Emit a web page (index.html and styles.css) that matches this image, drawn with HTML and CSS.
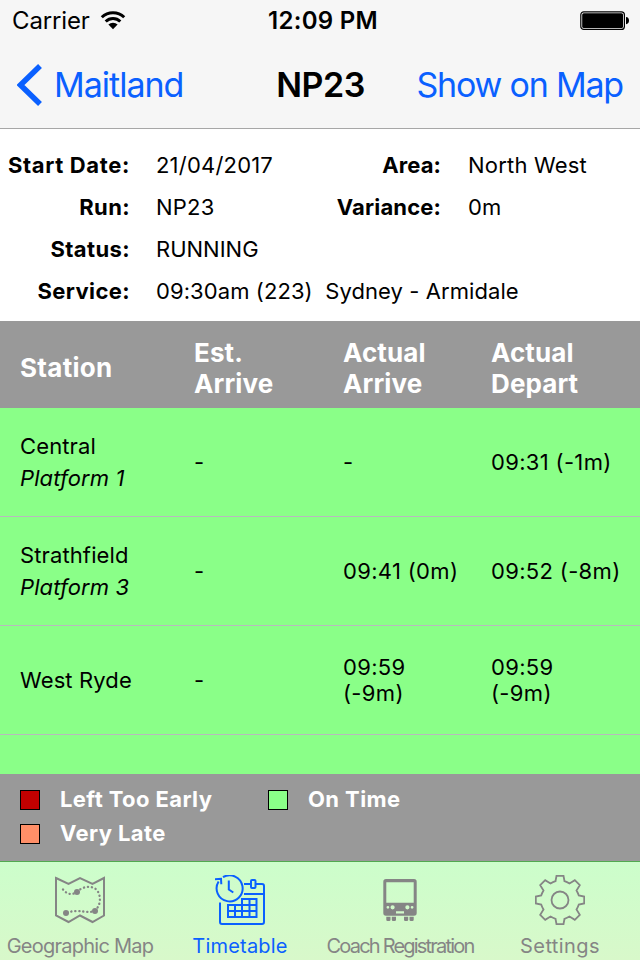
FILE: index.html
```
<!DOCTYPE html>
<html lang="en">
<head>
    <meta charset="UTF-8">
    <meta name="viewport" content="width=device-width, initial-scale=1.0">
    <title>NP23 timetable</title>
    <link rel="stylesheet" href="styles.css">
</head>
<body>

  <header class="top">
    <div class="status">
      <div class="carrier">
        <span>Carrier</span>
        <svg class="wifi" viewBox="0 0 26 19">
          <path d="M1.800 6.200a16 16 0 0 1 22.400 0M5.700 10.500a10.500 10.500 0 0 1 14.600 0" fill="none" stroke="#000" stroke-width="3"/>
          <path d="M8.400 13.600a6.600 6.600 0 0 1 9.200 0L13 18.200z"/>
        </svg>
      </div>
      <span class="clock">12:09 PM</span>
      <svg class="battery" viewBox="0 0 50 20">
        <rect x="0.8" y="0.8" width="43.6" height="17.6" rx="3" fill="none" stroke="#000" stroke-width="1.2"/>
        <rect x="2.2" y="2.2" width="40.8" height="14.8" rx="1.5"/>
        <path d="M46 6c2 0 3 1.500 3 3.600s-1 3.600-3 3.600z"/>
      </svg>
    </div>
    <nav class="navbar">
      <a class="back">
        <svg viewBox="0 0 26 42"><path d="M23 2L3.500 21 23 40" fill="none" stroke="#0a60ff" stroke-width="5.500"/></svg>
        <span>Maitland</span>
      </a>
      <h1>NP23</h1>
      <a class="show-map">Show on Map</a>
    </nav>
  </header>

  <section class="details">
    <b class="start">Start Date:</b><span>21/04/2017</span><b class="area">Area:</b><span>North West</span>
    <b>Run:</b><span>NP23</span><b class="variance">Variance:</b><span>0m</span>
    <b>Status:</b><span class="wide running">RUNNING</span>
    <b>Service:</b><span class="wide service">09:30am (223)&nbsp; Sydney - Armidale</span>
  </section>

  <main class="timetable">
    <div class="row head">
      <div class="station">Station</div><div>Est.<br>Arrive</div><div>Actual<br>Arrive</div><div>Actual<br>Depart</div>
    </div>
    <div class="row">
      <div class="station">Central<br><i>Platform 1</i></div><div>-</div><div>-</div><div>09:31 (-1m)</div>
    </div>
    <div class="row">
      <div class="station">Strathfield<br><i>Platform 3</i></div><div>-</div><div>09:41 (0m)</div><div>09:52 (-8m)</div>
    </div>
    <div class="row">
      <div class="station">West Ryde</div><div>-</div><div>09:59<br>(-9m)</div><div>09:59<br>(-9m)</div>
    </div>
  </main>

  <section class="legend">
    <div><i class="swatch early"></i><span>Left Too Early</span></div>
    <div><i class="swatch on-time"></i><span>On Time</span></div>
    <div><i class="swatch late"></i><span>Very Late</span></div>
  </section>

  <footer class="tabs">
    <a class="tab geo">
      <svg viewBox="0 0 50 50">
        <path d="M1 3l12.500 6L25 3l12.500 6L49 3v37.500L37.500 47 25 40.500 13.500 47 1 40.500z" stroke-width="2"/>
        <path d="M8 14.500c3 4 8 6 13 3 6-6 14-7 19-4 6 4 7 16 0 22-8 4-14-2-28 2" stroke-width="2.300" stroke-linecap="round" stroke-dasharray="0.200 3.800"/>
        <g class="solid"><circle cx="22" cy="17" r="3"/><circle cx="11" cy="38" r="3"/><circle cx="40" cy="36" r="3"/></g>
      </svg>
      <span>Geographic Map</span>
    </a>
    <a class="tab time active">
      <svg viewBox="0 0 50 50">
        <path d="M8 2.200A13 13 0 1 1 3.600 6.500" stroke-width="2"/>
        <path d="M0 4.200l6-.4.300 5.500M13.800 5.500v9l4.500 3" stroke-width="2"/>
        <path d="M29 9h6.500M41 9h6q2 0 2 2v36q0 2-2 2H7q-2 0-2-2V27.500M29 19h20" stroke-width="2"/>
        <rect x="36" y="5" width="4.500" height="8" rx="1" stroke-width="2"/>
        <path d="M13 30h14v-6h14.500v18H13zM13 36h28.500M20 30v12M27 30v12M34.500 24v18M27 30h14.500" stroke-width="2"/>
      </svg>
      <span>Timetable</span>
    </a>
    <a class="tab coach">
      <svg viewBox="0 0 50 50">
        <path class="solid" fill-rule="evenodd" d="M11 4h28q2.700 0 2.700 2.700V38q0 2.700-2.700 2.700H11Q8.300 40.700 8.300 38V6.700Q8.300 4 11 4zM11.300 7.300v20.400h27.400V7.300zM11.500 32.300a1.400 1.400 0 1 0 2.800 0a1.400 1.400 0 1 0-2.800 0M15.500 32.300a2.100 2.100 0 1 0 4.200 0a2.100 2.100 0 1 0-4.200 0M30.300 32.300a2.100 2.100 0 1 0 4.200 0a2.100 2.100 0 1 0-4.200 0M35.700 32.300a1.400 1.400 0 1 0 2.800 0a1.400 1.400 0 1 0-2.800 0M21 36.300v2.200h8v-2.200z"/>
        <path class="solid" d="M11.300 41.700h4.200v3q0 1.300-1.300 1.300h-1.600q-1.300 0-1.300-1.300zM16.800 41.700H21v3q0 1.300-1.300 1.300h-1.600q-1.300 0-1.300-1.300zM29 41.700h4.200v3q0 1.300-1.300 1.300h-1.600q-1.300 0-1.300-1.300zM34.500 41.700h4.200v3q0 1.300-1.300 1.300h-1.600q-1.300 0-1.300-1.300z"/>
      </svg>
      <span>Coach Registration</span>
    </a>
    <a class="tab settings">
      <svg viewBox="-25 -25 50 50">
        <path stroke-width="1.800" d="M-3.500-24.200h7L4.500-18.800Q7-18 9.500-16.500L14.800-19.800 19.800-14.800 16.500-9.500Q18-7 18.800-4.500L24.200-3.500v7L18.800 4.500Q18 7 16.500 9.500L19.800 14.800 14.800 19.800 9.500 16.500Q7 18 4.500 18.800L3.500 24.200h-7L-4.500 18.800Q-7 18-9.500 16.500L-14.800 19.800-19.800 14.800-16.500 9.500Q-18 7-18.800 4.500L-24.200 3.500v-7L-18.800-4.500Q-18-7-16.500-9.500L-19.800-14.800-14.800-19.800-9.500-16.500Q-7-18-4.500-18.800z"/>
        <circle r="8.500" stroke-width="1.800"/>
      </svg>
      <span>Settings</span>
    </a>
  </footer>

</body>
</html>
```
FILE: styles.css
```
* {
    margin: 0;
    padding: 0;
    box-sizing: border-box;
}
body {
    display: flex;
    flex-direction: column;
    width: 640px;
    height: 960px;
    overflow: hidden;
    background: white;
    color: black;
    font-family: Inter, "Liberation Sans", sans-serif;
    font-size: 22px;
    line-height: 26px;
}
.top {
    height: 129px;
    background: #f6f6f6;
    border-bottom: 1px solid #a7a7a7;
}
.status, .navbar {
    display: grid;
    grid-template-columns: 1fr auto 1fr;
    align-items: center;
}
.status {
    height: 42px;
    padding: 0 11px 0 12px;
    font-size: 24px;
}
.carrier {
    display: flex;
    align-items: center;
    gap: 10px;
    letter-spacing: -0.15px;
}
.wifi {
    width: 26px;
    height: 19px;
    margin-bottom: 2px;
}
.clock {
    padding-left: 5px;
    font-weight: 600;
    letter-spacing: 0.3px;
}
.battery {
    width: 50px;
    height: 20px;
    margin-right: -1px;
    justify-self: end;
}
.navbar {
    height: 85px;
    padding: 0 17px;
    font-size: 34px;
    line-height: 42px;
}
.navbar a {
    color: #0a60ff;
}
.navbar h1 {
    padding-left: 1px;
    font-size: 34px;
    font-weight: 600;
    letter-spacing: -0.5px;
}
.back {
    display: flex;
    gap: 11px;
    letter-spacing: -1px;
}
.back svg {
    width: 26px;
    height: 42px;
}
.show-map {
    justify-self: end;
    letter-spacing: -1.2px;
    white-space: nowrap;
}
.details {
    display: grid;
    grid-template-columns: 130px 151px 108px 1fr;
    grid-auto-rows: 42px;
    column-gap: 26px;
    align-items: center;
    height: 192px;
    padding-top: 15px;
    letter-spacing: 0.2px;
}
.details b {
    text-align: right;
    letter-spacing: 0.4px;
    white-space: nowrap;
}
.details .start {
    letter-spacing: 0.65px;
}
.details .area {
    letter-spacing: 0.1px;
}
.details .area + span, .details .variance + span {
    padding-left: 1px;
}
.details .variance {
    letter-spacing: 0.15px;
}
.details .wide {
    grid-column: span 3;
}
.details .running {
    letter-spacing: 0;
}
.details .service {
    letter-spacing: 0.08px;
}
.timetable {
    height: 453px;
    background: #8aff88;
    letter-spacing: 0.33px;
}
.row {
    display: grid;
    grid-template-columns: 174px 149px 148px 1fr;
    align-items: center;
    height: 109px;
    padding-left: 20px;
    border-bottom: 1px solid #b9b9bd;
}
.station {
    line-height: 32px;
    letter-spacing: 0.12px;
}
.row.head {
    height: 87px;
    padding-top: 7px;
    border: 0;
    background: #999;
    color: white;
    font-size: 26px;
    font-weight: bold;
    line-height: 31px;
    letter-spacing: 0.1px;
}
.head .station {
    letter-spacing: 0.3px;
}
.legend {
    display: grid;
    grid-template-columns: 248px 1fr;
    grid-auto-rows: 34px;
    height: 87px;
    padding: 9px 20px;
    background: #999;
    color: white;
    font-weight: bold;
    letter-spacing: 0.4px;
}
.legend div {
    display: flex;
    align-items: center;
}
.legend span {
    margin-bottom: 2px;
}
.swatch {
    width: 20px;
    height: 20px;
    margin-right: 20px;
    border: 1px solid black;
}
.early { background: #c00000; }
.on-time { background: #8aff88; }
.late { background: #ff8f68; }
.tabs {
    display: grid;
    grid-template-columns: repeat(4, 160px);
    height: 99px;
    border-top: 1px solid #51a951;
    background: linear-gradient(#ccfecb, #d8f8ca);
}
.tab {
    display: flex;
    flex-direction: column;
    align-items: center;
    padding-top: 13px;
    color: #858585;
    font-size: 20px;
    white-space: nowrap;
}
.geo { letter-spacing: -0.75px; }
.time { letter-spacing: 0.2px; }
.coach { letter-spacing: -1.8px; }
.settings { letter-spacing: 0.4px; }
.tab svg {
    width: 50px;
    height: 50px;
    margin-bottom: 8px;
    fill: none;
    stroke: currentColor;
}
.tab .solid {
    fill: currentColor;
    stroke: none;
}
.tab.active {
    color: #0a60ff;
}
```
